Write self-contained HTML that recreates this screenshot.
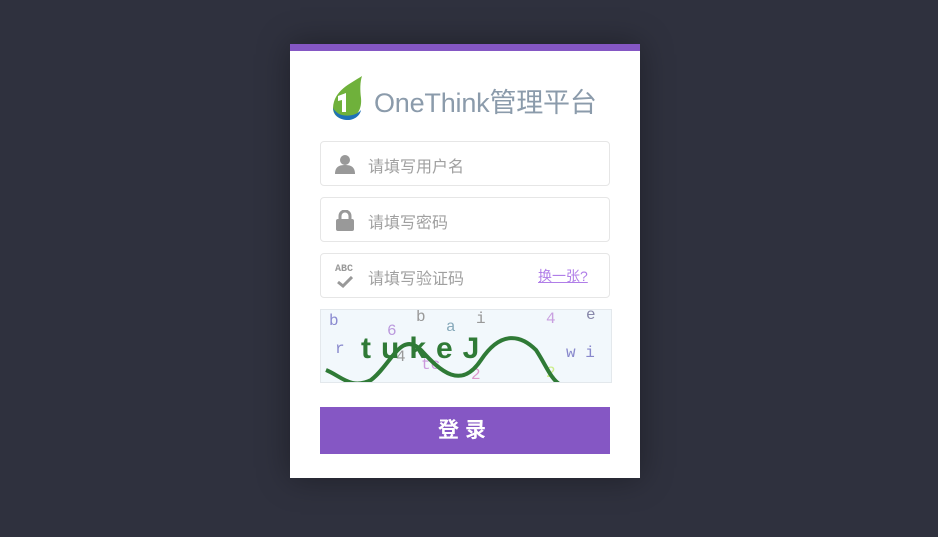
<!DOCTYPE html>
<html><head><meta charset="utf-8"><style>
body{margin:0;width:938px;height:537px;background:#2f313e;font-family:"Liberation Sans","Noto Sans CJK SC",sans-serif;position:relative;overflow:hidden}
.card{position:absolute;left:290px;top:44px;width:350px;height:434px;background:#fff;border-top:7px solid #8557c4;box-sizing:border-box;box-shadow:0 0 30px rgba(0,0,0,.35)}
.title{position:absolute;left:374px;top:81px;font-size:27px;color:#8b9bab;white-space:nowrap;letter-spacing:-0.2px}
.inp{position:absolute;left:320px;width:290px;height:45px;border:1px solid #e6e6e6;border-radius:4px;box-sizing:border-box;background:#fff}
.ph{position:absolute;left:47px;top:11px;font-size:16px;color:#a0a0a0}
.ic{position:absolute;left:14px;top:12px}
.cap{position:absolute;left:320px;top:309px;width:292px;height:74px;background:#f2f8fc;border:1px solid #e3e8ec;box-sizing:border-box;overflow:hidden;font-family:"Liberation Mono",monospace}
.btn{position:absolute;left:320px;top:407px;width:290px;height:47px;background:#8557c4;color:#fff;font-size:21px;font-weight:bold;text-align:center;line-height:47px;letter-spacing:6px}
</style></head><body>
<div class="card"></div>
<svg style="position:absolute;left:330px;top:74px" width="34" height="48" viewBox="0 0 34 48">
<path d="M32 2 C20 10 4 16 3 34 C3 42 10 46 18 45 C28 43 32 34 31 24 C30 16 30 8 32 2Z" fill="#6fb13b"/>
<path d="M3 34 C4 42 10 46 18 46 C24 46 30 42 31 36 C26 42 16 43 9 40 C6 38 4 36 3 34Z" fill="#1f72b8"/>
<path d="M8 22 L16 19 L16 38 L12 38 L12 26 L8 27Z" fill="#fff"/>
</svg>
<div class="title">OneThink管理平台</div>
<div class="inp" style="top:141px"><svg class="ic" width="20" height="20" viewBox="0 0 20 20"><circle cx="10" cy="6" r="5" fill="#999"/><path d="M0 20 C0 13 4 11 10 11 C16 11 20 13 20 20Z" fill="#999"/></svg><div class="ph">请填写用户名</div></div>
<div class="inp" style="top:197px"><svg class="ic" width="20" height="22" viewBox="0 0 20 22"><path d="M5 10 V6 A5 5 0 0 1 15 6 V10" stroke="#999" stroke-width="3" fill="none"/><rect x="1" y="9" width="18" height="12" rx="2" fill="#999"/></svg><div class="ph">请填写密码</div></div>
<div class="inp" style="top:253px"><div style="position:absolute;left:14px;top:10px;font-size:10px;color:#999;font-family:'Liberation Mono',monospace;font-weight:bold">ABC</div><svg style="position:absolute;left:16px;top:22px" width="16" height="12"><path d="M1 6 L6 10 L15 1" stroke="#999" stroke-width="3" fill="none"/></svg><div class="ph">请填写验证码</div><div style="position:absolute;left:217px;top:12px;font-size:14px;color:#b07ee8;text-decoration:underline">换一张?</div></div>
<div class="cap">
<span style="position:absolute;left:8px;top:2px;color:#8a8ad0;font-size:16px">b</span>
<span style="position:absolute;left:95px;top:-2px;color:#999;font-size:16px">b</span>
<span style="position:absolute;left:125px;top:8px;color:#8ab;font-size:16px">a</span>
<span style="position:absolute;left:155px;top:0px;color:#999;font-size:16px">i</span>
<span style="position:absolute;left:225px;top:0px;color:#c9a0e0;font-size:16px">4</span>
<span style="position:absolute;left:265px;top:-4px;color:#88a;font-size:16px">e</span>
<span style="position:absolute;left:66px;top:12px;color:#b9d;font-size:16px">6</span>
<span style="position:absolute;left:14px;top:30px;color:#88c;font-size:16px">r</span>
<span style="position:absolute;left:75px;top:38px;color:#999;font-size:16px">4</span>
<span style="position:absolute;left:100px;top:46px;color:#c9d;font-size:16px">tc</span>
<span style="position:absolute;left:245px;top:34px;color:#88c;font-size:16px">w i</span>
<span style="position:absolute;left:225px;top:54px;color:#ce8;font-size:16px">2</span>
<span style="position:absolute;left:150px;top:56px;color:#d9c;font-size:16px">2</span>
<svg style="position:absolute;left:0;top:0" width="292" height="74"><path d="M5 60 C20 66 30 80 50 70 C70 55 80 20 100 40 C120 62 140 80 160 50 C180 20 200 25 215 40 C225 55 230 70 240 75" stroke="#2f7a36" stroke-width="4" fill="none"/>
<text x="40" y="48" font-size="30" font-weight="bold" fill="#2f7a36" font-family="Liberation Sans" letter-spacing="10">tukeJ</text></svg>
</div>
<div class="btn">登录</div>
</body></html>
